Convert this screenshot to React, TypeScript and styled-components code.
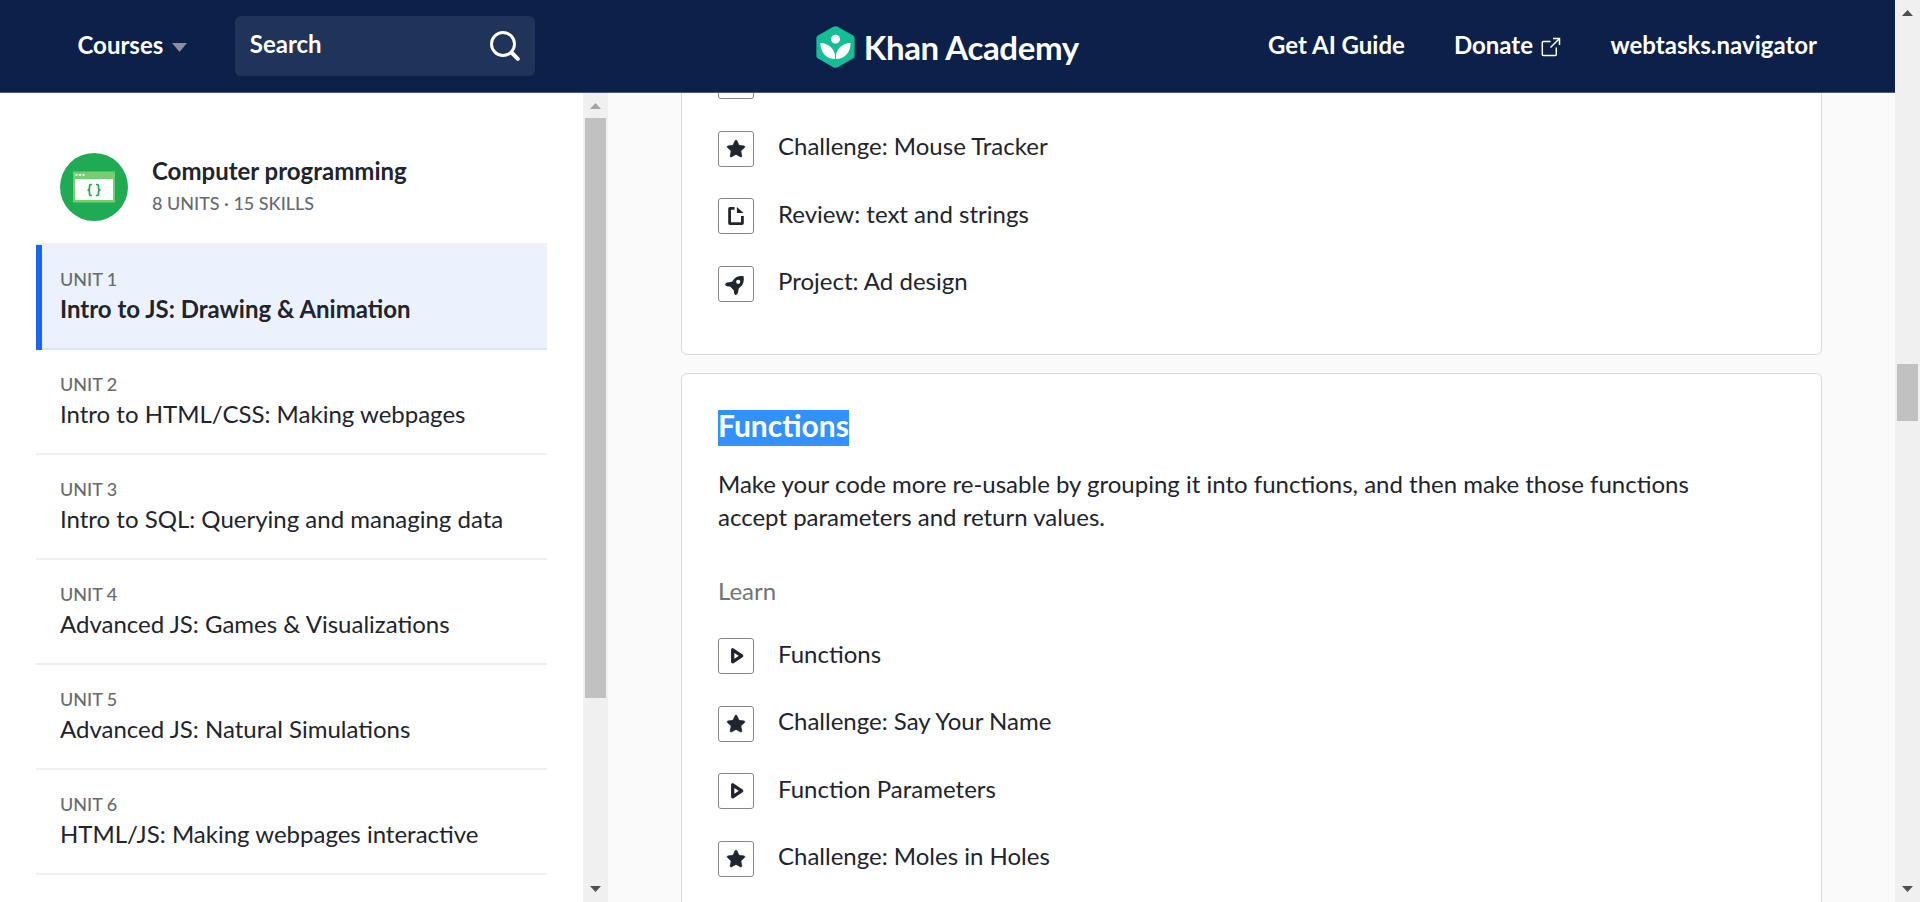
import React from 'react';
import styled, { createGlobalStyle } from 'styled-components';

const GlobalStyle = createGlobalStyle`
  * { box-sizing: border-box; }
  html, body { margin: 0; height: 902px; overflow: hidden; }
  body { font-family: Lato, "Liberation Sans", sans-serif; font-size: 24px; color: #21242c; background: #fafafa; }
  h1, h2, h3, p, ul { margin: 0; padding: 0; list-style: none; }
`;

const Window = styled.div`
  display: flex;
  width: 1920px;
  height: 902px;
`;

const Page = styled.div`
  display: flex;
  flex-direction: column;
  flex: 1;
  min-width: 0;
`;

const Header = styled.header`
  display: grid;
  grid-template-columns: 1fr auto 1fr;
  flex: none;
  height: 93px;
  padding: 0 78px 0 77.5px;
  color: #fff;
  background: #0c2049;
  border-bottom: 1px solid #4a5a7e;
`;

const NavGroup = styled.nav<{ $end?: boolean }>`
  display: flex;
  align-items: center;
  justify-content: ${(p) => (p.$end ? 'flex-end' : 'flex-start')};
  gap: ${(p) => (p.$end ? 49 : 48)}px;
`;

const NavLink = styled.a`
  display: flex;
  align-items: center;
  gap: 8.5px;
  padding-bottom: 2px;
  font-weight: 700;
  line-height: 30px;
  white-space: nowrap;
  svg { display: block; margin-top: 4px; }
`;

const SearchBox = styled.div`
  display: flex;
  align-items: center;
  justify-content: space-between;
  width: 300px;
  height: 60px;
  padding: 0 15px;
  border-radius: 6px;
  background: #203359;
  font-weight: 700;
  line-height: 30px;
`;

const SearchLabel = styled.span`
  padding-bottom: 4px;
`;

const Brand = styled.div`
  display: flex;
  align-items: center;
  gap: 9px;
  padding-top: 2px;
`;

const BrandName = styled.span`
  margin-top: -1px;
  font-size: 33px;
  font-weight: 700;
  line-height: 40px;
  letter-spacing: -0.38px;
  white-space: nowrap;
`;

const Body = styled.div`
  display: flex;
  flex: 1;
  min-height: 0;
`;

const Sidebar = styled.aside`
  width: 583px;
  flex: none;
  padding: 60px 36px 0;
  background: #fff;
  overflow: hidden;
`;

const Course = styled.div`
  display: flex;
  align-items: center;
  gap: 24px;
  height: 68px;
  margin-bottom: 22px;
  padding-left: 24px;
`;

const CourseText = styled.div`
  display: flex;
  flex-direction: column;
  gap: 5px;
  padding-bottom: 3px;
`;

const CourseTitle = styled.h1`
  font-size: 24px;
  font-weight: 700;
  line-height: 30px;
`;

const Caption = styled.div`
  font-size: 18px;
  font-weight: 500;
  line-height: 24px;
  color: #686a70;
`;

const Unit = styled.li<{ $active?: boolean }>`
  width: 511px;
  height: 105px;
  padding: 22px 0 0 ${(p) => (p.$active ? 18 : 24)}px;
  border-left: ${(p) => (p.$active ? '6px solid #1865f2' : 'none')};
  background: ${(p) => (p.$active ? '#ebf2fe' : '#fff')};
  box-shadow: inset 0 -2px 0 ${(p) => (p.$active ? '#dde4f0' : '#efeff0')};
`;

const UnitList = styled.ul`
  padding-top: 2px;
  box-shadow: inset 0 2px 0 #efeff0;
  width: 511px;
`;

const UnitTitle = styled.div<{ $active?: boolean }>`
  font-weight: ${(p) => (p.$active ? 700 : 400)};
  line-height: 30px;
  margin-top: 3px;
  white-space: nowrap;
`;

const Bar = styled.div`
  display: flex;
  flex-direction: column;
  align-items: center;
  width: 25px;
  flex: none;
  background: #f0f0f0;
`;

const BarEnd = styled.div<{ $down?: boolean }>`
  display: flex;
  justify-content: center;
  width: 25px;
  height: 25px;
  padding-top: ${(p) => (p.$down ? 9 : 10)}px;
`;

const Thumb = styled.div<{ $before: number; $size: number }>`
  width: 21px;
  height: ${(p) => p.$size}px;
  margin-top: ${(p) => p.$before}px;
  margin-bottom: auto;
  background: #c1c1c1;
`;

const Main = styled.main`
  flex: 1;
  padding: 0 73px;
  overflow: hidden;
`;

const Card = styled.section<{ $first?: boolean }>`
  height: ${(p) => (p.$first ? 302 : 600)}px;
  margin-top: ${(p) => (p.$first ? -40 : 18)}px;
  padding: ${(p) => (p.$first ? '9.55px' : '36px')} 36px 0;
  border: 1px solid #d9dadc;
  border-radius: 6px;
  background: #fff;
`;

const Heading = styled.h2`
  display: flex;
  height: 36px;
  font-size: 30px;
  font-weight: 700;
  line-height: 31px;
  color: #fff;
  span { background: #3390ff; }
`;

const Description = styled.p`
  width: 1000px;
  margin-top: 21px;
  line-height: 33px;
`;

const GroupLabel = styled.h3`
  margin-top: 40.5px;
  font-size: 24px;
  font-weight: 400;
  line-height: 33px;
  color: #717378;
`;

const Lessons = styled.ul<{ $gap?: number }>`
  padding-top: ${(p) => p.$gap ?? 0}px;
`;

const Lesson = styled.li`
  display: flex;
  gap: 24px;
  height: 67.5px;
  line-height: 30px;
`;

const IconBox = styled.span`
  display: block;
  width: 36px;
  height: 36px;
  margin-top: -0.3px;
  border: 1px solid #85878c;
  border-radius: 3px;
  svg { display: block; margin: -1px; }
`;

type Kind = 'star' | 'page' | 'rocket' | 'play';

const LessonIcon = ({ kind }: { kind: Kind }) => (
  <IconBox>
    <svg width="36" height="36" viewBox="0 0 36 36" fill="#21242c">
      {kind === 'star' && (
        <path
          stroke="#21242c"
          strokeWidth="0.7"
          d="M17.1 9.7q.9-1.4 1.8 0l2.1 4.6 5 .6q1.5.4.5 1.6l-3.7 3.4 1 5q0 1.5-1.4.9L18 23.4l-4.4 2.4q-1.4.6-1.4-.9l1-5-3.7-3.4q-1-1.2.5-1.6l5-.6z"
        />
      )}
      {kind === 'page' && (
        <>
          <path d="M16.5 9H12a1.8 1.8 0 0 0-1.8 1.8v14.4A1.8 1.8 0 0 0 12 27h12a1.8 1.8 0 0 0 1.8-1.8V18H23v6.3H13V11.7h3.5z" />
          <path d="M18.9 9v5.9h6.7z" />
        </>
      )}
      {kind === 'rocket' && (
        <path
          fillRule="evenodd"
          d="M25.6 10.2c-5-.6-8.3.8-10.6 4.2l-1 1.3-5 .8c-1.3.3-2.2 2-1.5 2.9.5.8 3 1 4.6 1.2l3.6 3.6c.2 1.6.4 4 1.2 4.5.9.6 2.5-.2 2.9-1.6l1-4.9 1.3-1c3.1-2.4 4.3-6 3.5-11zM20.2 13.7a2.1 2.1 0 1 1 0 4.2 2.1 2.1 0 0 1 0-4.2z"
        />
      )}
      {kind === 'play' && (
        <path d="M14.7 11.8v12l9-6z" fill="none" stroke="#21242c" strokeWidth="3.3" strokeLinejoin="round" />
      )}
    </svg>
  </IconBox>
);

const Arrow = ({ down, faint }: { down?: boolean; faint?: boolean }) => (
  <BarEnd $down={down}>
    <svg width="11" height="6" viewBox="0 0 11 6" fill={faint ? '#a3a3a3' : '#505050'}>
      <path d={down ? 'M0 0h11L5.5 6z' : 'M0 6h11L5.5 0z'} />
    </svg>
  </BarEnd>
);

const Scrollbar = ({ before, size, faintTop }: { before: number; size: number; faintTop?: boolean }) => (
  <Bar>
    <Arrow faint={faintTop} />
    <Thumb $before={before} $size={size} />
    <Arrow down />
  </Bar>
);

const LogoMark = () => (
  <svg width="39" height="42" viewBox="0 0 40 43">
    <path
      fill="#14bf96"
      d="M2 9.6 17.7.8q2.3-1.2 4.6 0L38 9.6q1.6 1 1.6 3v17.8q0 2-1.6 3L22.3 42.2q-2.3 1.2-4.6 0L2 33.4q-1.6-1-1.6-3V12.6q0-2 1.6-3z"
    />
    <circle cx="20" cy="13.5" r="4.6" fill="#fff" />
    <path fill="#fff" d="M4.5 17.3c9 .2 15.5 6.6 15.5 16.5C10.5 33.8 4.5 27 4.5 17.3zM35.5 17.3c0 9.7-6 16.5-15.5 16.5 0-9.9 6.5-16.3 15.5-16.5z" />
    <path fill="none" stroke="#14bf96" strokeWidth="1" d="M20 27v7" />
  </svg>
);

const CourseBadge = () => (
  <svg width="68" height="68" viewBox="0 0 68 68">
    <circle cx="34" cy="34" r="34" fill="#1fab54" />
    <rect x="13" y="18.5" width="42" height="31" fill="#74cf70" />
    <rect x="15" y="26" width="38" height="21" fill="#fff" />
    <g fill="#fff">
      <rect x="15.5" y="21" width="2" height="2" />
      <rect x="19" y="21" width="2" height="2" />
      <rect x="22.5" y="21" width="2" height="2" />
    </g>
    <g fill="none" stroke="#1fab54" strokeWidth="1.7">
      <path d="M32 31.5h-1q-1.5 0-1.5 1.5v2q0 2-2 2 2 0 2 2v2q0 1.5 1.5 1.5h1" />
      <path d="M36 31.5h1q1.5 0 1.5 1.5v2q0 2 2 2-2 0-2 2v2q0 1.5-1.5 1.5h-1" />
    </g>
  </svg>
);

const units = [
  'Intro to JS: Drawing & Animation',
  'Intro to HTML/CSS: Making webpages',
  'Intro to SQL: Querying and managing data',
  'Advanced JS: Games & Visualizations',
  'Advanced JS: Natural Simulations',
  'HTML/JS: Making webpages interactive',
];

const textLessons: [Kind, string][] = [
  ['play', ''],
  ['star', 'Challenge: Mouse Tracker'],
  ['page', 'Review: text and strings'],
  ['rocket', 'Project: Ad design'],
];

const functionLessons: [Kind, string][] = [
  ['play', 'Functions'],
  ['star', 'Challenge: Say Your Name'],
  ['play', 'Function Parameters'],
  ['star', 'Challenge: Moles in Holes'],
];

const LessonList = ({ items, gap }: { items: [Kind, string][]; gap?: number }) => (
  <Lessons $gap={gap}>
    {items.map(([kind, title], i) => (
      <Lesson key={i}>
        <LessonIcon kind={kind} />
        {title}
      </Lesson>
    ))}
  </Lessons>
);

export default function App() {
  return (
    <Window>
      <GlobalStyle />
      <Page>
        <Header>
          <NavGroup>
            <NavLink>
              Courses
              <svg width="15" height="10" viewBox="0 0 15 10"><path d="M0 1h15L7.5 10z" fill="#868fa4" /></svg>
            </NavLink>
            <SearchBox>
              <SearchLabel>Search</SearchLabel>
              <svg width="30" height="30" viewBox="0 0 30 30" fill="none" stroke="#fff">
                <circle cx="13" cy="13" r="11.5" strokeWidth="2.9" />
                <path d="m22 22 5.8 5.8" strokeWidth="4" strokeLinecap="round" />
              </svg>
            </SearchBox>
          </NavGroup>
          <Brand>
            <LogoMark />
            <BrandName>Khan Academy</BrandName>
          </Brand>
          <NavGroup $end>
            <NavLink>Get AI Guide</NavLink>
            <NavLink>
              Donate
              <svg width="20" height="20" viewBox="0 0 20 20" fill="none" stroke="#fff" strokeWidth="1.5">
                <path d="M9.5 4.5H2.3q-1 0-1 1v12q0 1 1 1h12q1 0 1-1v-7M12 1.5h6.5V8M18.5 1.5 9.5 10.5" />
              </svg>
            </NavLink>
            <NavLink>webtasks.navigator</NavLink>
          </NavGroup>
        </Header>
        <Body>
          <Sidebar>
            <Course>
              <CourseBadge />
              <CourseText>
                <CourseTitle>Computer programming</CourseTitle>
                <Caption>8 UNITS · 15 SKILLS</Caption>
              </CourseText>
            </Course>
            <UnitList>
              {units.map((title, i) => (
                <Unit key={i} $active={i === 0}>
                  <Caption>UNIT {i + 1}</Caption>
                  <UnitTitle $active={i === 0}>{title}</UnitTitle>
                </Unit>
              ))}
            </UnitList>
          </Sidebar>
          <Scrollbar before={0} size={580} faintTop />
          <Main>
            <Card $first>
              <LessonList items={textLessons} />
            </Card>
            <Card>
              <Heading><span>Functions</span></Heading>
              <Description>
                Make your code more re-usable by grouping it into functions, and then make those functions accept parameters and return values.
              </Description>
              <GroupLabel>Learn</GroupLabel>
              <LessonList items={functionLessons} gap={32.05} />
            </Card>
          </Main>
        </Body>
      </Page>
      <Scrollbar before={339} size={57} />
    </Window>
  );
}
